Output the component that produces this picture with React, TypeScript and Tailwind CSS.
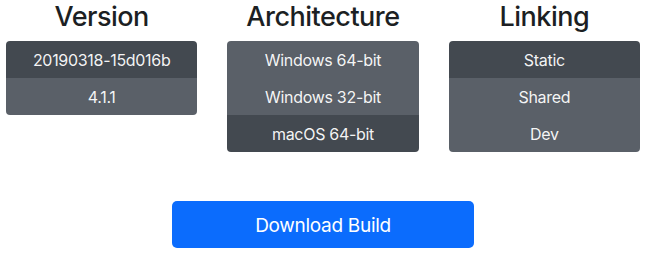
import { useState } from 'react';

type Group = { title: string; options: string[] };

const groups: Group[] = [
  { title: 'Version', options: ['20190318-15d016b', '4.1.1'] },
  { title: 'Architecture', options: ['Windows 64-bit', 'Windows 32-bit', 'macOS 64-bit'] },
  { title: 'Linking', options: ['Static', 'Shared', 'Dev'] },
];

const OptionList = ({ group, selected, onSelect }: { group: Group; selected: string; onSelect: (v: string) => void }) => (
  <div className="flex flex-col items-center">
    <h3 className="text-[27px] leading-[34px] font-medium tracking-[-0.5px] text-[#1c1f23] mb-[7px]">{group.title}</h3>
    <div className="w-full flex flex-col rounded-[4px] overflow-hidden">
      {group.options.map((opt) => (
        <button
          key={opt}
          onClick={() => onSelect(opt)}
          className={`h-[37px] w-full text-[16px] tracking-[-0.3px] text-white/95 text-center
            ${selected === opt ? 'bg-[#434950]' : 'bg-[#5a6068]'}`}
        >
          {opt}
        </button>
      ))}
    </div>
  </div>
);

export default function App() {
  const [version, setVersion] = useState('20190318-15d016b');
  const [arch, setArch] = useState('macOS 64-bit');
  const [linking, setLinking] = useState('Static');

  const values = [version, arch, linking];
  const setters = [setVersion, setArch, setLinking];

  return (
    <div className="w-[650px] h-[264px] bg-white font-['Inter',sans-serif] pl-[6px] pr-[10px]">
      <div className="grid grid-cols-3 gap-x-[30px]">
        {groups.map((g, i) => (
          <OptionList key={g.title} group={g} selected={values[i]} onSelect={setters[i]} />
        ))}
      </div>
      <div className="flex justify-center mt-[49px]">
        <button className="w-[302px] h-[47px] pt-[3px] rounded-[5px] bg-[#0b6cfd] text-white text-[19px] tracking-[-0.3px]">
          Download Build
        </button>
      </div>
    </div>
  );
}
